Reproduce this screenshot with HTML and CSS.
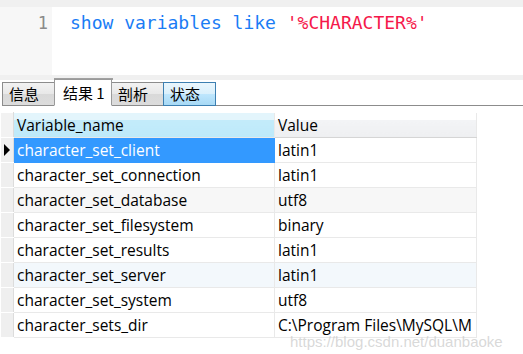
FILE: index.html
```html
<!DOCTYPE html>
<html lang="zh-CN">
<head>
  <meta charset="UTF-8">
  <title>show variables</title>
  <link rel="stylesheet" href="styles.css">
</head>
<body>
  <div class="top-strip"></div>

  <div class="editor">
    <div class="gutter">1</div>
    <div class="code"><span class="kw">show variables like</span> <span class="str">'%CHARACTER%'</span></div>
  </div>

  <div class="hscroll"><div class="thumb"></div></div>

  <nav class="tabs">
    <span class="tab">信息</span>
    <span class="tab active">结果 1</span>
    <span class="tab">剖析</span>
    <span class="tab hot">状态</span>
    <span class="tab-rest"></span>
  </nav>

  <table class="grid">
    <thead>
      <tr>
        <th class="rh"></th>
        <th class="col-name">Variable_name</th>
        <th class="col-value">Value</th>
      </tr>
    </thead>
    <tbody>
      <tr class="current">
        <td class="rh"><span class="arrow"></span></td>
        <td class="sel">character_set_client</td>
        <td>latin1</td>
      </tr>
      <tr>
        <td class="rh"></td>
        <td>character_set_connection</td>
        <td>latin1</td>
      </tr>
      <tr class="alt">
        <td class="rh"></td>
        <td>character_set_database</td>
        <td>utf8</td>
      </tr>
      <tr>
        <td class="rh"></td>
        <td>character_set_filesystem</td>
        <td>binary</td>
      </tr>
      <tr>
        <td class="rh"></td>
        <td>character_set_results</td>
        <td>latin1</td>
      </tr>
      <tr class="hover">
        <td class="rh"></td>
        <td>character_set_server</td>
        <td>latin1</td>
      </tr>
      <tr>
        <td class="rh"></td>
        <td>character_set_system</td>
        <td>utf8</td>
      </tr>
      <tr>
        <td class="rh"></td>
        <td>character_sets_dir</td>
        <td class="clip">C:\Program Files\MySQL\M</td>
      </tr>
    </tbody>
  </table>

  <div class="watermark">https://blog.csdn.net/duanbaoke</div>
</body>
</html>
```

FILE: styles.css
```css
body {
  margin: 0;
  width: 523px;
  height: 354px;
  overflow: hidden;
  background: #fff;
  font-family: "Open Sans", "Noto Sans CJK SC", sans-serif;
  position: relative;
}
.top-strip {
  height: 7px;
  background: #f0f0f0;
}
.editor {
  display: flex;
  height: 68px;
}
.gutter {
  width: 52px;
  flex-shrink: 0;
  background: #f7f7f7;
  color: #8a8a8a;
  font-family: "DejaVu Sans Mono", monospace;
  font-size: 17px;
  text-align: right;
  padding: 6px 4px 0 0;
  box-sizing: border-box;
}
.code {
  padding: 5px 0 0 18px;
  font-family: "DejaVu Sans Mono", monospace;
  font-size: 18px;
  white-space: pre;
}
.kw {
  color: #1a7cf5;
}
.str {
  color: #f5184a;
}
.hscroll {
  height: 5px;
  background: #f0f0f0;
  position: relative;
}
.thumb {
  position: absolute;
  left: 54px;
  top: 3px;
  width: 59px;
  height: 2px;
  background: #a0a0a0;
}
.tabs {
  display: flex;
  align-items: flex-end;
  height: 26px;
  padding-left: 2px;
  font-family: "Noto Sans CJK SC", sans-serif;
  font-size: 15px;
}
.tab {
  box-sizing: border-box;
  width: 53px;
  height: 24px;
  line-height: 22px;
  padding-left: 6px;
  border: 1px solid #8c8c8c;
  background: linear-gradient(#f2f2f2, #e8e8e8 50%, #d9d9d9 51%, #dcdcdc);
  color: #000;
  margin-right: -1px;
}
.tab.active {
  width: 58px;
  height: 27px;
  line-height: 25px;
  padding-left: 8px;
  background: #fff;
  border-color: #9a9a9a;
  border-bottom-color: #fff;
  position: relative;
  z-index: 1;
}
.tab.hot {
  border-color: #3c7fb1;
  background: linear-gradient(#eaf6fd, #d9f0fc 50%, #bee6fd 51%, #a7d9f5);
}
.tab-rest {
  flex: 1;
  border-bottom: 1px solid #8c8c8c;
  margin-left: 1px;
}
.grid {
  margin-top: 6px;
  border-collapse: collapse;
  font-size: 15.5px;
  table-layout: fixed;
  width: 476px;
}
.grid th,
.grid td {
  height: 25px;
  padding: 0 0 0 3px;
  box-sizing: border-box;
  text-align: left;
  font-weight: normal;
  white-space: nowrap;
  overflow: hidden;
  border: 1px solid #e9e9e9;
  border-top: none;
  color: #000;
}
.grid .rh {
  width: 13px;
  padding: 0;
  background: #efefef;
  border: 1px solid #fff;
  border-right: 1px solid #dcdcdc;
}
.grid thead .rh {
  background: #f2f2f2;
}
.col-name {
  width: 261px;
  background: linear-gradient(#e3f5fc 0%, #e3f5fc 30%, #c3ebfa 31%, #bde9f9 100%);
}
.col-value {
  width: 202px;
  background: linear-gradient(#fff 0%, #fff 30%, #f3f4f6 31%, #eeeff1 100%);
  border-bottom: 1px solid #d5d5d5 !important;
}
.grid td.sel {
  background: #3399ff;
  color: #fff;
  border-color: #3399ff;
}
.grid tr.alt td {
  background: #f7f7f7;
}
.grid tr.hover td {
  background: #f3f8fc;
}
.grid tr.alt td.rh,
.grid tr.hover td.rh {
  background: #efefef;
}
.arrow {
  display: block;
  width: 0;
  height: 0;
  margin-left: 3px;
  border-top: 6px solid transparent;
  border-bottom: 6px solid transparent;
  border-left: 6px solid #000;
}
.clip {
  text-overflow: clip;
}
.watermark {
  position: absolute;
  left: 290px;
  top: 333px;
  font-family: "Liberation Sans", sans-serif;
  font-size: 15px;
  line-height: 17px;
  color: rgba(200, 200, 200, 0.7);
}
```
